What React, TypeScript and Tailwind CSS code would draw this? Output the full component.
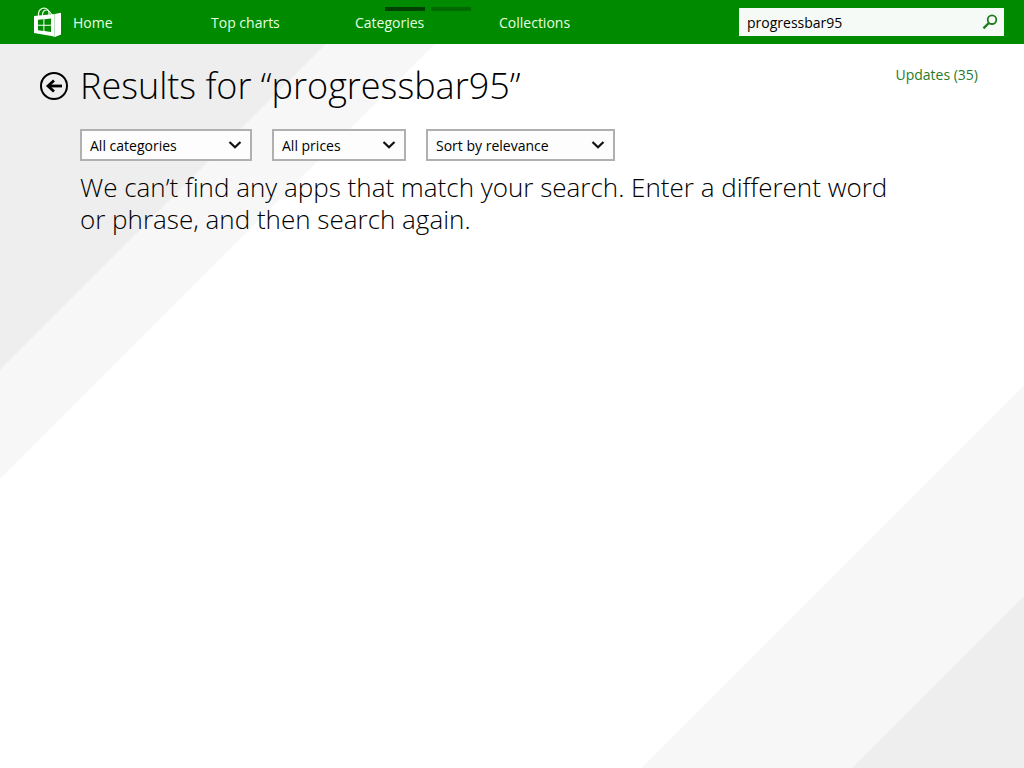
import { useState } from 'react';
import type { JSX } from 'react';

interface NavItem {
  label: string;
  href: string;
}

interface Filter {
  id: string;
  label: string;
  options: string[];
  width: string;
}

const NAV_ITEMS: NavItem[] = [
  { label: 'Top charts', href: '#top-charts' },
  { label: 'Categories', href: '#categories' },
  { label: 'Collections', href: '#collections' },
];

const FILTERS: Filter[] = [
  { id: 'category', label: 'Category', options: ['All categories'], width: 'w-43' },
  { id: 'price', label: 'Price', options: ['All prices'], width: 'w-[134px]' },
  { id: 'sort', label: 'Sort order', options: ['Sort by relevance'], width: 'w-[189px]' },
];

export default function App(): JSX.Element {
  const [query, setQuery] = useState('progressbar95');

  return (
    <div className="flex min-h-screen flex-col bg-white font-['Open_Sans','Noto_Sans',sans-serif] text-black">
      <header className="relative flex h-11 items-center bg-[#008a00] pr-5 pl-[33px]">
        <nav className="flex flex-1 items-center pt-0.5 text-sm text-[#e6ffe0]">
          <a href="#home" className="flex w-[178px] items-center gap-3">
            <StoreLogo />
            Home
          </a>
          {NAV_ITEMS.map((item) => (
            <a key={item.href} href={item.href} className="w-36">
              {item.label}
            </a>
          ))}
        </nav>

        {/* Page indicator over the nav */}
        <div className="absolute top-[7px] left-[385px] flex gap-1.5" aria-hidden="true">
          <span className="h-1 w-10 bg-[#004000]" />
          <span className="h-1 w-10 bg-[#006a00]" />
        </div>

        <form
          role="search"
          className="flex h-7 w-[265px] items-center bg-[#f6faf6] pr-1.5 pl-2"
          onSubmit={(e) => e.preventDefault()}
        >
          <input
            type="text"
            aria-label="Search for apps"
            value={query}
            onChange={(e) => setQuery(e.target.value)}
            className="min-w-0 flex-1 bg-transparent pt-0.5 text-sm text-black outline-none"
          />
          <button type="submit" aria-label="Search">
            <SearchIcon />
          </button>
        </form>
      </header>

      <main className="flex-1 bg-[linear-gradient(135deg,#eeeeee_230px,#f7f7f7_231px,#f7f7f7_307px,transparent_308px),linear-gradient(315deg,#eeeeee_121px,#f7f7f7_122px,#f7f7f7_270px,transparent_271px)] pr-[46px] pl-10">
        <div className="flex items-start justify-between pt-4">
          <div className="flex items-center gap-3">
            <button type="button" aria-label="Back">
              <BackIcon />
            </button>
            <h1 className="text-4xl leading-[52px] font-light">Results for “progressbar95”</h1>
          </div>
          <a href="#updates" className="pt-1 text-sm leading-[22px] text-[#2a7a2a]">
            Updates (35)
          </a>
        </div>

        <div className="pl-10">
          <div className="mt-[17px] flex gap-5">
            {FILTERS.map((filter) => (
              <FilterSelect key={filter.id} filter={filter} />
            ))}
          </div>
          <p className="mt-2.5 max-w-[820px] text-[26px] leading-8 font-light">
            We can’t find any apps that match your search. Enter a different word or phrase, and then search again.
          </p>
        </div>
      </main>
    </div>
  );
}

function FilterSelect({ filter }: { filter: Filter }): JSX.Element {
  return (
    <div className={`relative ${filter.width}`}>
      <select
        id={filter.id}
        aria-label={filter.label}
        className="block h-8 w-full appearance-none border-2 border-[#b0b0b0] bg-[#fdfdfd] px-2 pt-0.5 text-sm text-black"
      >
        {filter.options.map((option) => (
          <option key={option}>{option}</option>
        ))}
      </select>
      <svg
        width="14"
        height="10"
        viewBox="0 0 14 10"
        fill="none"
        aria-hidden="true"
        className="pointer-events-none absolute top-[11px] right-2.5"
      >
        <path d="M1.5 2L7 7.3 12.5 2" stroke="#111" strokeWidth="2.2" />
      </svg>
    </div>
  );
}

function StoreLogo(): JSX.Element {
  return (
    <svg width="28" height="32" viewBox="0 1 28 32" fill="none" aria-hidden="true">
      <path d="M5.5 10V7.5c0-3 2.5-5.3 5.5-5.3s5 2.3 5 5V9" stroke="#e6ffe0" strokeWidth="1.3" />
      <path d="M9.5 11V8.5c0-2.600 1.800-4.500 4-4.500s3.500 1.800 5.500 5" stroke="#e6ffe0" strokeWidth="1.2" />
      <path d="M1 10L21.500 8v22.500L1 27z" fill="white" />
      <path d="M21.500 8L28 6.800v21.700L22 31l-.5-.5z" fill="white" />
      <path d="M21.500 30.500L19 30l3 1.200z" fill="white" />
      <path
        d="M5 13.800l5.400-.5v5.400H5zM11.400 13.200l6.600-.7v6.200h-6.600zM5 19.700h5.400V25L5 24.300zM11.400 19.700H18V26l-6.600-.9z"
        fill="#008a00"
      />
    </svg>
  );
}

function BackIcon(): JSX.Element {
  return (
    <svg width="28" height="28" viewBox="0 0 28 28" fill="none" stroke="black" aria-hidden="true">
      <circle cx="14" cy="14" r="13" strokeWidth="2" />
      <path d="M22 14H8" strokeWidth="2.8" />
      <path d="M14 8.500L8 14l6 5.500" strokeWidth="2.8" />
    </svg>
  );
}

function SearchIcon(): JSX.Element {
  return (
    <svg width="16" height="16" viewBox="0 0 16 16" fill="none" stroke="#1f7a1f" aria-hidden="true">
      <circle cx="10" cy="5.7" r="4.3" strokeWidth="1.8" />
      <path d="M6.800 9L1.500 14.300" strokeWidth="2.4" />
    </svg>
  );
}
